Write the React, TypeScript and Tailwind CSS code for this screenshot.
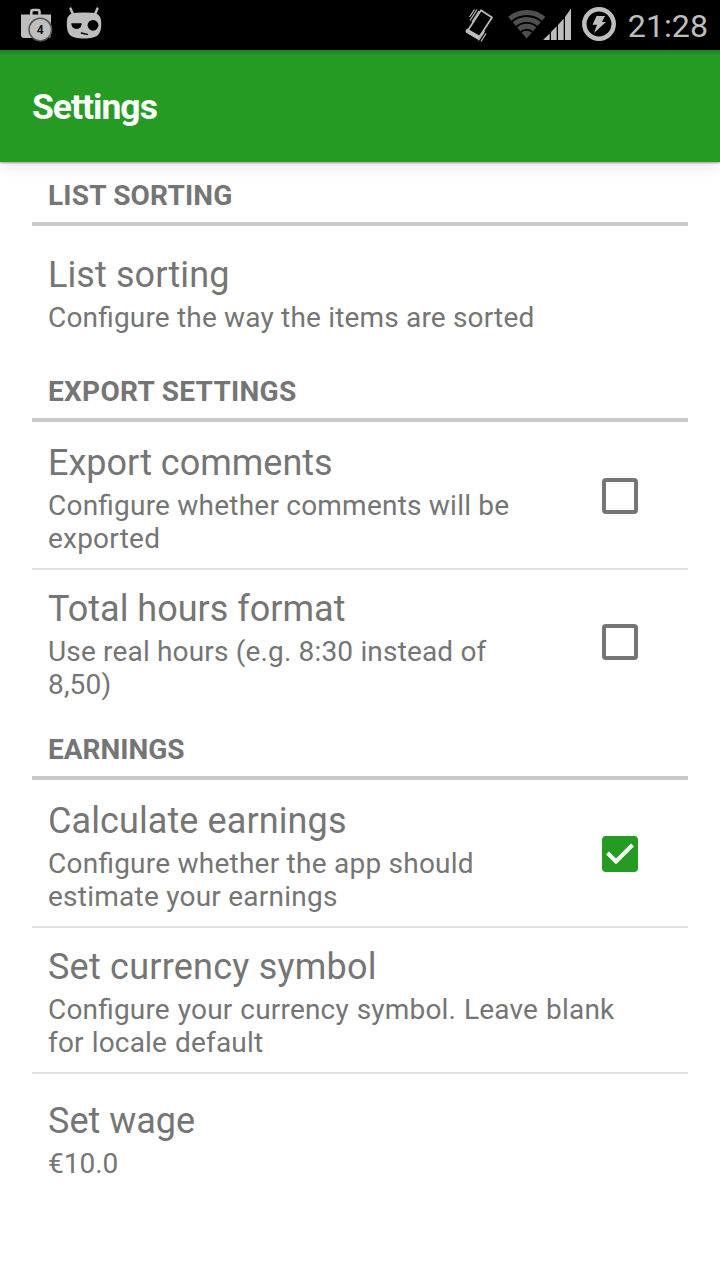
import { useState } from "react";

type Preference = {
  id: string;
  title: string;
  summary: string;
  titleClass?: string;
  summaryClass?: string;
  checkbox?: boolean;
};

type Section = {
  heading: string;
  headingClass?: string;
  items: Preference[];
};

const sections: Section[] = [
  {
    heading: "LIST SORTING",
    headingClass: "tracking-[0.2px]",
    items: [
      {
        id: "sorting",
        title: "List sorting",
        summary: "Configure the way the items are sorted",
        titleClass: "tracking-[0.1px]",
        summaryClass: "tracking-[0.18px] pb-0.5",
      },
    ],
  },
  {
    heading: "EXPORT SETTINGS",
    headingClass: "tracking-[0.3px]",
    items: [
      {
        id: "comments",
        title: "Export comments",
        summary: "Configure whether comments will be\nexported",
        summaryClass: "tracking-[0.22px]",
        checkbox: true,
      },
      {
        id: "hours",
        title: "Total hours format",
        summary: "Use real hours (e.g. 8:30 instead of\n8,50)",
        summaryClass: "tracking-[0.17px]",
        checkbox: true,
      },
    ],
  },
  {
    heading: "EARNINGS",
    items: [
      {
        id: "earnings",
        title: "Calculate earnings",
        summary: "Configure whether the app should\nestimate your earnings",
        titleClass: "tracking-[0.1px]",
        summaryClass: "tracking-[0.24px]",
        checkbox: true,
      },
      {
        id: "currency",
        title: "Set currency symbol",
        summary: "Configure your currency symbol. Leave blank\nfor locale default",
        titleClass: "tracking-[0.23px]",
        summaryClass: "tracking-[0.18px] [word-spacing:0.8px]",
      },
      {
        id: "wage",
        title: "Set wage",
        summary: "€10.0",
        summaryClass: "pb-0.5",
      },
    ],
  },
];

function StatusBar() {
  return (
    <div className="flex h-[50px] items-center justify-between bg-black">
      <svg width="120" height="50" viewBox="0 0 120 50" fill="#bebebe">
        {/* store update */}
        <path d="M31.300 15v-3.200q0-1.800 1.800-1.800h4.600q1.800 0 1.800 1.800v3.200" fill="none" stroke="#bebebe" strokeWidth="2.600" />
        <path d="M21 14.500h30V35q0 3-3 3H24q-3 0-3-3z" />
        <circle cx="40.300" cy="29.600" r="11.300" stroke="#555" strokeWidth="1.500" />
        <text x="40.300" y="34" textAnchor="middle" fontSize="12" fontWeight="700" fontFamily="Roboto, sans-serif" fill="#111">
          4
        </text>
        {/* android head */}
        <path d="M70.500 8.500l3 7M97.500 8.500l-3 7" stroke="#bebebe" strokeWidth="2.400" strokeLinecap="round" />
        <path d="M76 12.800q8-.8 16 0c7 .7 9.200 3.500 9.200 11.200 0 11-4.200 14.500-17.200 14.500S66.800 35 66.800 24c0-7.700 2.200-10.500 9.200-11.200z" />
        <path d="M71.300 23.300h10.400c0 3.500-2 5.700-5 5.700-3.300 0-5.400-2.200-5.400-5.700z" fill="#000" />
        <circle cx="93" cy="25.300" r="5.400" fill="#000" />
        <path d="M81.300 33l6 1.300" stroke="#000" strokeWidth="1.300" strokeLinecap="round" />
      </svg>
      <div className="flex items-center">
        <svg width="160" height="50" viewBox="460 0 160 50" fill="#bebebe">
          {/* vibrating phone */}
          <path d="M481 10.300l11 7.200-13.800 21.300-11.200-7z" fill="none" stroke="#bebebe" strokeWidth="1.700" strokeLinejoin="round" />
          <path d="M467 28.500l13.200 7.500-2 3.500-12.200-7q-1.200-1.500 1-4z" />
          <path d="M469.500 17l5-7.500M470 20.500l7-11M472 22l7-11M478.500 40.500l5.500-8M481 41.500l5-8M479.500 36l5-5" stroke="#bebebe" strokeWidth="1.200" />
          {/* wifi */}
          <clipPath id="wifi">
            <path d="M526.700 38.500L504 12V5h45.500v7z" />
          </clipPath>
          <g clipPath="url(#wifi)" fill="none" stroke="#4f4f4f" strokeWidth="5">
            <circle cx="526.700" cy="38.500" r="26" />
            <circle cx="526.700" cy="38.500" r="19" />
            <circle cx="526.700" cy="38.500" r="12.200" />
            <circle cx="526.700" cy="38.500" r="4" strokeWidth="7.500" />
          </g>
          {/* signal */}
          <path d="M543 40l6.700-6.500V40zM551 32l5.700-5.800V40H551zM558 25l5.700-6.500V40H558zM565 17l6-8.500V40h-6z" />
          {/* battery */}
          <circle cx="599" cy="24" r="14.700" fill="none" stroke="#bebebe" strokeWidth="4.500" />
          <path d="M596.500 16h8.500l-3 6h4l-12 11 3-8.300h-4.500z" />
        </svg>
        <span className="mr-3 ml-2 pt-0.5 text-[32.200px] leading-[48px] text-[#bebebe]">21:28</span>
      </div>
    </div>
  );
}

function Checkbox({ checked }: { checked: boolean }) {
  if (!checked) {
    return <span className="block size-9 rounded-[4px] border-4 border-[#757575]" />;
  }
  return (
    <span className="block size-9 rounded-[4px] bg-[#259b24]">
      <svg width="36" height="36" viewBox="0 0 36 36" fill="none" stroke="#fff" strokeWidth="4">
        <path d="M5.500 17l8.500 8.500L30.500 9" />
      </svg>
    </span>
  );
}

export default function App() {
  const [checked, setChecked] = useState<Record<string, boolean>>({ earnings: true });

  const toggle = (id: string) => setChecked((prev) => ({ ...prev, [id]: !prev[id] }));

  return (
    <div className="min-h-[1280px] w-[720px] bg-white font-['Roboto',sans-serif] text-[#757575]">
      <StatusBar />
      <header className="flex h-28 items-center bg-[#259b24] bg-linear-to-b from-[#237f22] to-[#259b24] to-[6px] px-8 pt-1 shadow-[0_1px_2px_rgba(0,0,0,0.35),0_4px_14px_rgba(0,0,0,0.1)]">
        <h1 className="text-[35.500px] font-bold tracking-[-1px] text-white">Settings</h1>
      </header>

      <main className="px-8">
        {sections.map((section) => (
          <section key={section.heading}>
            <h2 className="flex h-16 items-center border-b-4 border-[#cacaca] px-4 pt-2 text-[28px] font-bold">
              <span className={section.headingClass}>{section.heading}</span>
            </h2>
            <ul className="divide-y-2 divide-[#e1e1e1] py-0.5">
              {section.items.map((item) => (
                <li
                  key={item.id}
                  onClick={() => item.checkbox && toggle(item.id)}
                  className="flex min-h-32 items-center justify-between px-4"
                >
                  <div className="pt-[18px] pb-[13px]">
                    <h3 className={`mb-1 text-[36px] leading-[43px] ${item.titleClass ?? ""}`}>{item.title}</h3>
                    <p
                      className={`text-[28px] leading-[33px] whitespace-pre [font-feature-settings:'liga'] ${item.summaryClass ?? ""}`}
                    >
                      {item.summary}
                    </p>
                  </div>
                  {item.checkbox && (
                    <div className="mr-[34px]">
                      <Checkbox checked={!!checked[item.id]} />
                    </div>
                  )}
                </li>
              ))}
            </ul>
          </section>
        ))}
      </main>
    </div>
  );
}
